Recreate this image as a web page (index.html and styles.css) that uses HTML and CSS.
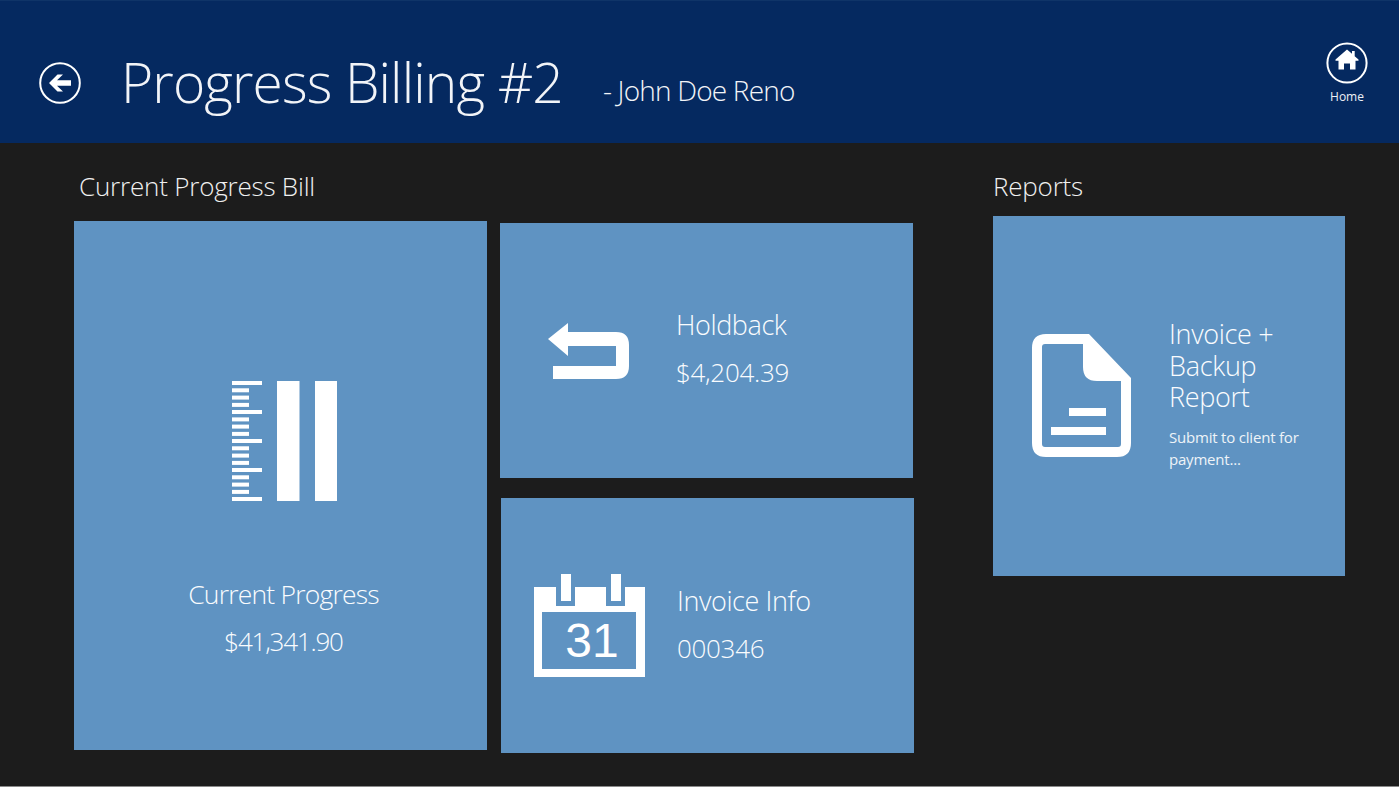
FILE: index.html
```html
<!DOCTYPE html>
<html lang="en">
<head>
<meta charset="utf-8">
<title>Progress Billing #2</title>
<link rel="stylesheet" href="styles.css">
</head>
<body>
<header class="topbar">
  <svg class="back" viewBox="0 0 42 42" aria-hidden="true">
    <circle cx="21" cy="21" r="19.8" fill="none" stroke="#fff" stroke-width="2"/>
    <path d="M10 21 18.500 12.500H24L18 18.300H32V23.700H18L24 29.500H18.500Z" fill="#fff"/>
  </svg>
  <h1 class="title">Progress Billing #2</h1>
  <p class="subtitle">- John Doe Reno</p>
  <div class="home">
    <svg class="home-icon" viewBox="0 0 42 42" aria-hidden="true">
      <circle cx="21" cy="21" r="19.600" fill="none" stroke="#fff" stroke-width="2"/>
      <path d="M21 7.500 26 11.800V9H28.700V14.200L32.500 17.500V18.800H29.500V27.500H24V21.500H18V27.500H12.500V18.800H9.500V17.500Z" fill="#fff"/>
    </svg>
    <span class="home-label">Home</span>
  </div>
</header>
<main class="content">
  <section class="bill">
    <h2 class="section-title">Current Progress Bill</h2>
    <div class="bill-tiles">
      <article class="tile tile-large">
        <svg class="icon-ruler" viewBox="0 0 105 120" aria-hidden="true">
          <g fill="#fff">
            <rect x="0" y="0" width="30" height="4"/>
            <rect x="0" y="7.300" width="17" height="4"/>
            <rect x="0" y="14.600" width="17" height="4"/>
            <rect x="0" y="21.900" width="17" height="4"/>
            <rect x="0" y="29" width="30" height="4"/>
            <rect x="0" y="36.400" width="17" height="4"/>
            <rect x="0" y="43.600" width="17" height="4"/>
            <rect x="0" y="50.900" width="17" height="4"/>
            <rect x="0" y="58" width="30" height="4"/>
            <rect x="0" y="65.300" width="17" height="4"/>
            <rect x="0" y="72.600" width="17" height="4"/>
            <rect x="0" y="79.900" width="17" height="4"/>
            <rect x="0" y="87" width="30" height="4"/>
            <rect x="0" y="94.300" width="17" height="4"/>
            <rect x="0" y="101.600" width="17" height="4"/>
            <rect x="0" y="108.900" width="17" height="4"/>
            <rect x="0" y="116" width="30" height="4"/>
            <rect x="45" y="0" width="22.500" height="120"/>
            <rect x="83" y="0" width="22.500" height="120"/>
          </g>
        </svg>
        <p class="tile-heading large-heading">Current Progress</p>
        <p class="tile-value large-value">$41,341.90</p>
      </article>
      <div class="tile-stack">
        <article class="tile tile-wide holdback">
          <svg class="icon-return" viewBox="0 0 81 56" aria-hidden="true">
            <path d="M0 16 20 0V9H68Q81 9 81 22V43Q81 56 68 56H5V43H68V23H20V33Z" fill="#fff"/>
          </svg>
          <div class="tile-text">
            <p class="tile-heading">Holdback</p>
            <p class="tile-value">$4,204.39</p>
          </div>
        </article>
        <article class="tile tile-wide invoice">
          <svg class="icon-calendar" viewBox="0 0 111 103" aria-hidden="true">
            <path fill-rule="evenodd" d="M0 13H22V32H41V13H72V32H91V13H111V103H0ZM8 38V95H102V38Z" fill="#fff"/>
            <rect x="27" y="0" width="10" height="27" fill="#fff"/>
            <rect x="77" y="0" width="10" height="27" fill="#fff"/>
            <text class="calendar-day" x="58" y="83" text-anchor="middle">31</text>
          </svg>
          <div class="tile-text">
            <p class="tile-heading">Invoice Info</p>
            <p class="tile-value">000346</p>
          </div>
        </article>
      </div>
    </div>
  </section>
  <section class="reports">
    <h2 class="section-title">Reports</h2>
    <article class="tile tile-report">
      <svg class="icon-doc" viewBox="0 0 99 123" aria-hidden="true">
        <path fill-rule="evenodd" d="M14 0H57L99 44V109Q99 123 85 123H14Q0 123 0 109V14Q0 0 14 0ZM13 10Q10 10 10 13V110Q10 113 13 113H86Q89 113 89 110V47H65Q51 47 51 33V10Z" fill="#fff"/>
        <rect x="37" y="74" width="37" height="8" fill="#fff"/>
        <rect x="19" y="93" width="55" height="8" fill="#fff"/>
      </svg>
      <div class="report-text">
        <p class="report-heading">Invoice + Backup Report</p>
        <p class="report-note">Submit to client for payment...</p>
      </div>
    </article>
  </section>
</main>
</body>
</html>
```

FILE: styles.css
```css
* { box-sizing: border-box; }
html, body { margin: 0; height: 100%; }
body {
  background: #1c1c1c;
  border-bottom: 1px solid #8a8a8a;
  color: #fff;
  font-family: "Open Sans", "Liberation Sans", sans-serif;
  font-weight: 300;
  overflow: hidden;
}
h1, h2, p { margin: 0; font-weight: 300; }

.topbar {
  height: 143px;
  background: #052960;
  border-top: 1px solid #0f3468;
  display: flex;
  align-items: center;
  padding: 0 31px 0 39px;
}
.back { width: 42px; height: 42px; flex: none; margin-top: 22px; }
.title {
  margin-left: 40px;
  margin-top: 19px;
  font-size: 55px;
  line-height: 68px;
  letter-spacing: -0.850px;
  color: #f2f4f8;
}
.subtitle {
  margin-left: 40px;
  margin-top: 36px;
  font-size: 28px;
  line-height: 36px;
  letter-spacing: -0.800px;
  color: #f2f4f8;
}
.home {
  margin-left: auto;
  margin-top: 2px;
  display: flex;
  flex-direction: column;
  align-items: center;
  gap: 5px;
}
.home-icon { width: 42px; height: 42px; }
.home-label { font-size: 12px; line-height: 16px; font-weight: 400; color: #eef1f6; }

.content { display: flex; padding-left: 74px; }
.bill { width: 840px; }
.reports { width: 352px; margin-left: 79px; }
.section-title {
  font-size: 26px;
  line-height: 32px;
  letter-spacing: -0.200px;
  color: #f0f0f0;
  margin-top: 27px;
}
.bill .section-title { margin-left: 5px; }

.bill-tiles { display: flex; gap: 13px; margin-top: 19px; align-items: flex-start; }
.tile { background: #5f93c2; }
.tile-large {
  width: 413px;
  height: 529px;
  display: flex;
  flex-direction: column;
  align-items: center;
  padding: 160px 0 0 6px;
}
.icon-ruler { width: 105px; height: 120px; margin-left: 2px; }
.tile-heading { font-size: 27px; line-height: 36px; letter-spacing: -0.400px; color: #fafcfe; }
.large-heading { margin-top: 75px; font-size: 26.500px; letter-spacing: -0.800px; }
.tile-value { font-size: 26px; line-height: 36px; letter-spacing: -0.300px; margin-top: 11px; color: #fafcfe; }
.large-value { letter-spacing: -1.200px; }

.tile-stack { display: flex; flex-direction: column; gap: 20px; margin-top: 2px; }
.tile-wide { width: 413px; height: 255px; display: flex; align-items: center; }
.holdback { padding-left: 48px; }
.invoice { margin-left: 1px; padding-left: 33px; }
.icon-return { width: 81px; height: 56px; flex: none; margin-top: 1px; }
.holdback .tile-text { margin-left: 47px; margin-top: -5px; }
.icon-calendar { width: 111px; height: 103px; flex: none; margin-top: -1px; }
.invoice .tile-text { margin-left: 32px; margin-top: -3px; }
.calendar-day {
  font-family: "Liberation Sans", Arial, sans-serif;
  font-size: 48px;
  font-weight: 400;
  fill: #fff;
}

.tile-report {
  width: 352px;
  height: 360px;
  margin-top: 14px;
  display: flex;
  align-items: flex-start;
  padding: 103px 0 0 39px;
}
.icon-doc { width: 99px; height: 123px; flex: none; margin-top: 15px; }
.report-text { margin-left: 38px; margin-top: -1px; }
.report-heading {
  font-size: 27px;
  line-height: 31.500px;
  letter-spacing: -0.300px;
  width: 120px;
  color: #fafcfe;
}
.report-note {
  font-size: 15px;
  line-height: 22px;
  font-weight: 400;
  letter-spacing: -0.200px;
  margin-top: 13px;
  width: 150px;
  color: #eef3f8;
}
```
